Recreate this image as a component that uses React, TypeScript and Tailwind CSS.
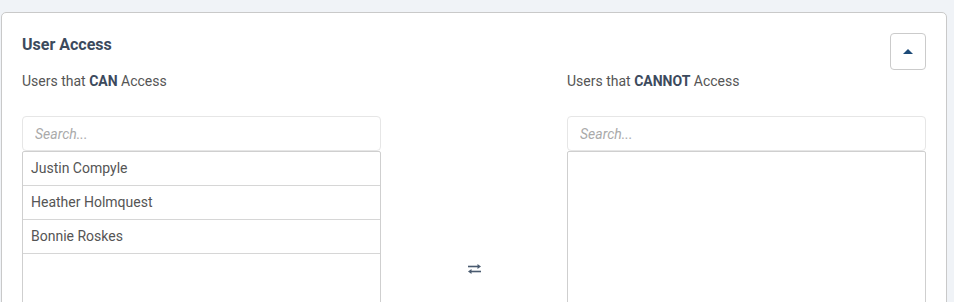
import { useState } from "react";

const canUsers = ["Justin Compyle", "Heather Holmquest", "Bonnie Roskes"];

function SwapIcon() {
  return (
    <svg width="15" height="10" viewBox="0 0 15 10" className="text-[#4a5b70]">
      <path d="M1 2.5h11" stroke="currentColor" strokeWidth="1.6" />
      <path d="M10.5 0l3.5 2.5-3.5 2.5z" fill="currentColor" />
      <path d="M14 7.5H3" stroke="currentColor" strokeWidth="1.6" />
      <path d="M4.5 5L1 7.5 4.5 10z" fill="currentColor" />
    </svg>
  );
}

function UserList({ users }: { users: string[] }) {
  return (
    <div className="h-[236px] border border-[#cfcfcf] rounded-t-[2px] bg-white">
      {users.map((u) => (
        <div
          key={u}
          className="h-[34px] flex items-center px-2 border-b border-[#d6d6d6] text-[14px] text-[#555]"
        >
          {u}
        </div>
      ))}
    </div>
  );
}

function SearchBox() {
  const [q, setQ] = useState("");
  return (
    <input
      value={q}
      onChange={(e) => setQ(e.target.value)}
      placeholder="Search..."
      className="block w-full h-[35px] px-3 border border-[#e6e6e6] rounded-[4px] text-[14px] text-[#555] placeholder:italic placeholder:text-[#aaa] focus:outline-none"
    />
  );
}

export default function App() {
  const [open, setOpen] = useState(true);

  return (
    <div className="bg-[#f0f3f7] pt-3 pl-px pr-[7px] font-['Roboto',sans-serif] overflow-hidden h-[302px]">
      <div className="bg-white border border-[#c9c9c9] rounded-[5px] px-5 pt-5">
        <div className="flex items-start justify-between">
          <h2 className="text-[16px] leading-5 font-bold text-[#3c4a5d] mt-[2px]">User Access</h2>
          <button
            onClick={() => setOpen(!open)}
            className="w-[36px] h-[37px] border border-[#cbcbcb] rounded-[4px] flex items-center justify-center"
          >
            <span className="w-0 h-0 border-l-[5px] border-r-[5px] border-b-[5px] border-l-transparent border-r-transparent border-b-[#1d4b78]" />
          </button>
        </div>

        <div className="grid grid-cols-[359px_1fr_359px]">
          <div className="pt-[2px]">
            <p className="text-[14px] leading-[18px] text-[#555]">
              Users that <span className="font-bold text-[#3c4a5d]">CAN</span> Access
            </p>
            <div className="mt-[26px]">
              <SearchBox />
            </div>
          </div>
          <div />
          <div className="pt-[2px]">
            <p className="text-[14px] leading-[18px] text-[#555]">
              Users that <span className="font-bold text-[#3c4a5d]">CANNOT</span> Access
            </p>
            <div className="mt-[26px]">
              <SearchBox />
            </div>
          </div>

          <UserList users={canUsers} />
          <div className="flex items-center justify-center">
            <SwapIcon />
          </div>
          <UserList users={[]} />
        </div>
      </div>
    </div>
  );
}
